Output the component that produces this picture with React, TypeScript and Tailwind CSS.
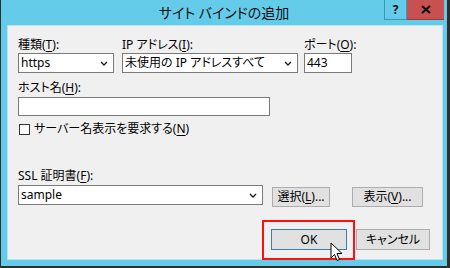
import React from "react";

const font = "[font-family:'Noto_Sans','Noto_Sans_CJK_JP',sans-serif]";

function U({ c }: { c: string }) {
  return <span className="underline underline-offset-[2px]">{c}</span>;
}

function Chevron() {
  return (
    <svg width="8" height="5" viewBox="0 0 8 5" className="shrink-0">
      <path d="M1 1 L4 4 L7 1" fill="none" stroke="#222" strokeWidth="1.4" />
    </svg>
  );
}

function Combo({ text, w }: { text: string; w: string }) {
  return (
    <div className={`${w} h-[20px] border border-[#7a7a7a] bg-white flex items-center pl-[2px] pr-[5px]`}>
      <span className="flex-1 text-[12px] leading-[18px] text-black whitespace-nowrap">{text}</span>
      <Chevron />
    </div>
  );
}

function Btn({ children, w, cls = "" }: { children: React.ReactNode; w: string; cls?: string }) {
  return (
    <div className={`${w} h-[20px] border border-[#adadad] bg-[#e1e1e1] flex items-center justify-center text-[12px] leading-[18px] text-black ${cls}`}>
      {children}
    </div>
  );
}

export default function App() {
  return (
    <div className={`w-[450px] h-[268px] bg-[#2e2e2e] overflow-hidden ${font} [font-feature-settings:'palt']`}>
      <div className="ml-[1px] w-[446px] h-[266px] bg-[#64cbe9] flex flex-col">
        {/* title bar */}
        <div className="h-[25px] flex items-start shrink-0">
          <div className="w-[63px]" />
          <div className="flex-1 h-[25px] flex items-center justify-center text-[14px] text-[#111]">
            サイト バインドの追加
          </div>
          <div className="flex h-[20px]">
            <div className="w-[23px] h-[20px] border-l border-b border-r border-[#3d97b3] flex items-center justify-center text-[12px] font-bold text-[#111]">
              ?
            </div>
            <div className="w-[37px] h-[20px] bg-[#c75050] border-b border-[#9e3a3a] flex items-center justify-center">
              <svg width="10" height="9" viewBox="0 0 10 9">
                <path d="M1 1 L9 8 M9 1 L1 8" stroke="#111" strokeWidth="2.2" />
              </svg>
            </div>
          </div>
          <div className="w-[3px]" />
        </div>

        {/* panel */}
        <div className="ml-[6px] mr-[4px] mb-[6px] flex-1 bg-[#f0f0f0] border border-[#b8e4f2] pl-[10px] pt-[11px] flex flex-col text-[12px] text-black">
          <div className="flex items-start">
            <div className="w-[96px] flex flex-col">
              <div className="h-[16px] leading-[16px] whitespace-nowrap">種類(<U c="T" />):</div>
              <Combo text="https" w="w-[96px]" />
            </div>
            <div className="ml-[8px] w-[176px] flex flex-col">
              <div className="h-[16px] leading-[16px] whitespace-nowrap">IP アドレス(<U c="I" />):</div>
              <Combo text="未使用の IP アドレスすべて" w="w-[176px]" />
            </div>
            <div className="ml-[6px] w-[48px] flex flex-col">
              <div className="h-[16px] leading-[16px] whitespace-nowrap">ポート(<U c="O" />):</div>
              <div className="w-[48px] h-[20px] border border-[#7a7a7a] bg-white flex items-center pl-[2px] leading-[18px]">443</div>
            </div>
          </div>

          <div className="mt-[7px] h-[16px] leading-[16px] whitespace-nowrap">ホスト名(<U c="H" />):</div>
          <div className="mt-[1px] w-[252px] h-[19px] border border-[#7a7a7a] bg-white" />

          <div className="mt-[5px] h-[16px] flex items-center">
            <div className="ml-[1px] w-[11px] h-[11px] border border-[#333] bg-white" />
            <span className="ml-[4px] whitespace-nowrap leading-[16px]">サーバー名表示を要求する(<U c="N" />)</span>
          </div>

          <div className="mt-[31px] h-[16px] leading-[16px] whitespace-nowrap">SSL 証明書(<U c="F" />):</div>
          <div className="mt-[1px] flex items-start">
            <Combo text="sample" w="w-[245px]" />
            <Btn w="w-[58px]" cls="ml-[9px] mt-[2px]">
              選択(<U c="L" />)...
            </Btn>
            <Btn w="w-[71px]" cls="ml-[22px] mt-[2px]">
              表示(<U c="V" />)...
            </Btn>
          </div>

          <div className="mt-[22px] flex justify-end pr-[12px]">
            <div className="relative">
              <div className="w-[76px] h-[21px] border border-[#3c7fb1] bg-[#e1e1e1] flex items-center justify-center leading-[18px]">
                OK
              </div>
              <div className="absolute left-[-9px] top-[-9px] w-[93px] h-[40px] border-2 border-[#ff1010] pointer-events-none" />
              <svg className="absolute left-[59px] top-[13px]" width="14" height="21" viewBox="0 0 14 21">
                <path d="M1 1 L1 16 L4.5 12.5 L7 18.5 L9.5 17.5 L7 11.5 L12 11.5 Z" fill="#fff" stroke="#000" strokeWidth="1" strokeLinejoin="round" />
              </svg>
            </div>
            <div className="ml-[9px] w-[74px] h-[21px] border border-[#adadad] bg-[#e1e1e1] flex items-center justify-center leading-[18px]">
              キャンセル
            </div>
          </div>
        </div>
      </div>
    </div>
  );
}
